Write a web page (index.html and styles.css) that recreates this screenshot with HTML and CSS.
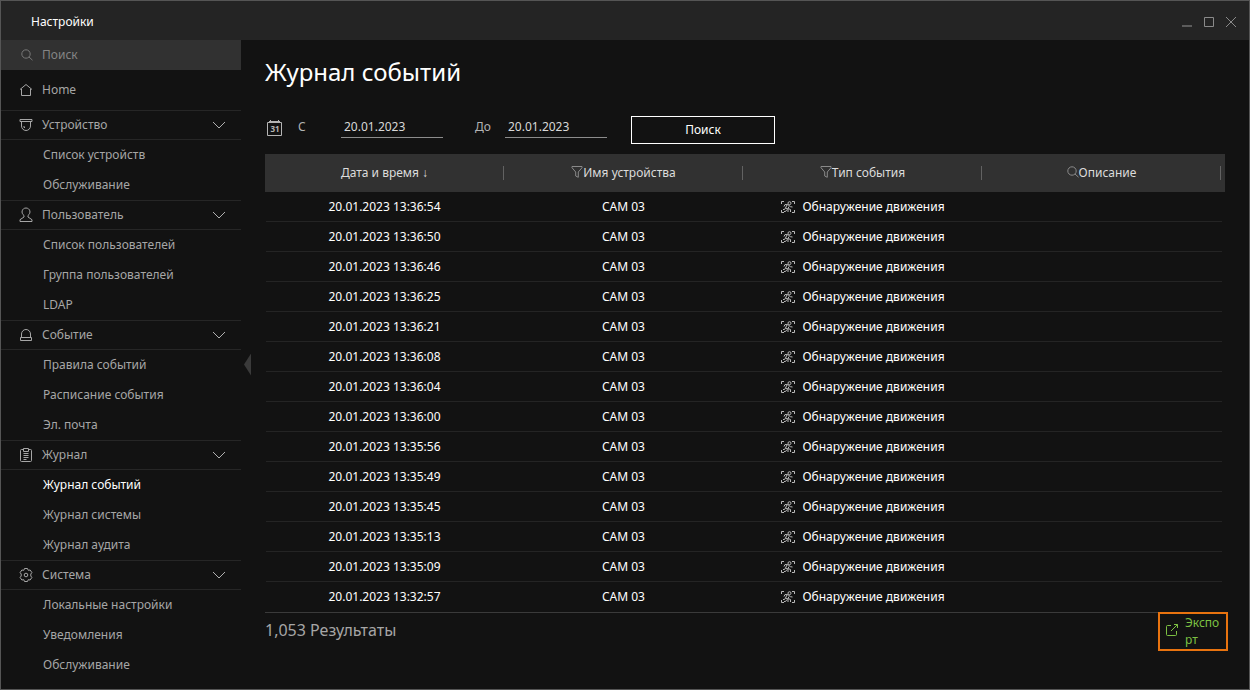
FILE: index.html
```
<!DOCTYPE html>
<html lang="ru">
<head>
<meta charset="utf-8">
<meta name="viewport" content="width=device-width, initial-scale=1">
<title>Настройки</title>
<link rel="stylesheet" href="styles.css">
<script src="app.js" defer></script>
</head>
<body>
<svg class="sprite" aria-hidden="true">
  <symbol id="i-search" viewBox="0 0 12 12"><circle cx="5" cy="5" r="4.2"/><path d="M8 8l3.500 3.200"/></symbol>
  <symbol id="i-filter" viewBox="0 0 12 12"><path d="M1 .5h10v1.200L7.300 6v5.300L4.700 10V6L1 1.700z"/></symbol>
  <symbol id="i-chevron" viewBox="0 0 14 8"><path d="M1 1l6 6 6-6"/></symbol>
  <symbol id="i-motion" viewBox="0 0 16 14"><path d="M1.500 4V1.500H4M12 1.500h2.500V4M14.500 10v2.500H12M4 12.500H1.500V10"/><circle cx="9.500" cy="3.200" r="1.500"/><path d="M4 6.500l1-2 3 .2 2.500 2 2 .3M7 5L5.500 8l2.500 1v3M5.500 8L4.500 9.500H3M9 6.500L8 8.500l2.500 1v2.500M4 11.500h1.500l1.500-2"/></symbol>
</svg>
<div class="window">
  <header class="titlebar">
    <span>Настройки</span>
    <div class="window-actions">
      <button type="button" aria-label="Свернуть"><svg class="icon" width="12" height="12" viewBox="0 0 12 12"><path class="thick" d="M1 10h10"/></svg></button>
      <button type="button" aria-label="Развернуть"><svg class="icon" width="12" height="12" viewBox="0 0 12 12"><path d="M1.500 1.500h9v9h-9z"/></svg></button>
      <button type="button" aria-label="Закрыть"><svg class="icon" width="12" height="12" viewBox="0 0 12 12"><path d="M1 1l10 10M11 1L1 11"/></svg></button>
    </div>
  </header>
  <div class="body">
    <aside class="sidebar">
      <label class="side-search"><svg class="icon" width="12" height="12"><use href="#i-search"/></svg><input type="search" placeholder="Поиск" aria-label="Поиск"></label>
      <nav>
        <a class="home" href="#home"><svg class="icon" width="14" height="14" viewBox="0 0 14 14"><path d="M1 6.500L7 1.500l6 5M2.500 6v6.500h9V6"/></svg>Home</a>
        <section>
          <button class="group" type="button" aria-expanded="true"><svg class="icon" width="14" height="14" viewBox="0 0 14 14"><path d="M1 1.500h12v2H1zM2.500 3.500v4.500a4.500 4.500 0 0 0 9 0V3.500M5 8v1.500h1"/></svg><span>Устройство</span><svg class="icon chevron" width="14" height="8"><use href="#i-chevron"/></svg></button>
          <ul><li><a href="#devices">Список устройств</a></li><li><a href="#maintenance">Обслуживание</a></li></ul>
        </section>
        <section>
          <button class="group" type="button" aria-expanded="true"><svg class="icon" width="14" height="16" viewBox="0 0 14 16"><path d="M5 8.500C1.500 6 3 1 7 1s5.500 5 2 7.500v1.500l4 2.700v1.800H1v-1.800L5 10z"/></svg><span>Пользователь</span><svg class="icon chevron" width="14" height="8"><use href="#i-chevron"/></svg></button>
          <ul><li><a href="#users">Список пользователей</a></li><li><a href="#groups">Группа пользователей</a></li><li><a href="#ldap">LDAP</a></li></ul>
        </section>
        <section>
          <button class="group" type="button" aria-expanded="true"><svg class="icon" width="14" height="14" viewBox="0 0 14 14"><path d="M2.500 9.500V6a4.500 4.500 0 0 1 9 0v3.500M1.500 9.500h11v3h-11z"/></svg><span>Событие</span><svg class="icon chevron" width="14" height="8"><use href="#i-chevron"/></svg></button>
          <ul><li><a href="#rules">Правила событий</a></li><li><a href="#schedule">Расписание события</a></li><li><a href="#mail">Эл. почта</a></li></ul>
        </section>
        <section>
          <button class="group" type="button" aria-expanded="true"><svg class="icon" width="14" height="14" viewBox="0 0 14 14"><path d="M4.500 1.500h-2q-1 0-1 1v10q0 1 1 1h9q1 0 1-1v-10q0-1-1-1h-2M4.500.5h5v3h-5zM4.500 5.500h5M4.500 7.500h5M4.500 9.500h5M4.500 11.500h3"/></svg><span>Журнал</span><svg class="icon chevron" width="14" height="8"><use href="#i-chevron"/></svg></button>
          <ul><li><a class="current" aria-current="page" href="#event-log">Журнал событий</a></li><li><a href="#system-log">Журнал системы</a></li><li><a href="#audit-log">Журнал аудита</a></li></ul>
        </section>
        <section>
          <button class="group" type="button" aria-expanded="true"><svg class="icon" width="14" height="14" viewBox="0 0 14 14"><circle cx="7" cy="7" r="1.800"/><path d="M5.500.5h3l.7 1.800 1.900-.3 1.800 2.500L11.800 6v2l1.100 1.500-1.800 2.500-1.900-.3-.7 1.800h-3l-.7-1.800-1.900.3-1.800-2.500L2.200 8V6L1.100 4.500 2.900 2l1.900.3z"/></svg><span>Система</span><svg class="icon chevron" width="14" height="8"><use href="#i-chevron"/></svg></button>
          <ul><li><a href="#local">Локальные настройки</a></li><li><a href="#notifications">Уведомления</a></li><li><a href="#service">Обслуживание</a></li></ul>
        </section>
      </nav>
      <button class="collapse" type="button" aria-label="Скрыть меню"></button>
    </aside>
    <main>
      <h1>Журнал событий</h1>
      <form class="filters">
        <svg class="icon calendar" width="16" height="16" viewBox="0 0 16 16"><path d="M.5 2.500h14v13H.5zM3.500 0v3M11.500 0v3M2 1.500h11"/><text x="8" y="12">31</text></svg>
        <label class="from"><span>С</span><input type="text" value="20.01.2023"></label>
        <label class="to"><span>До</span><input type="text" value="20.01.2023"></label>
        <button type="button" class="submit">Поиск</button>
      </form>
      <table>
        <colgroup><col><col><col><col><col class="gutter"></colgroup>
        <thead><tr>
          <th scope="col">Дата и время ↓</th>
          <th scope="col"><svg class="icon" width="12" height="12"><use href="#i-filter"/></svg>Имя устройства</th>
          <th scope="col"><svg class="icon" width="12" height="12"><use href="#i-filter"/></svg>Тип события</th>
          <th scope="col"><svg class="icon" width="12" height="12"><use href="#i-search"/></svg>Описание</th>
          <td></td>
        </tr></thead>
        <tbody id="events"></tbody>
      </table>
      <footer>
        <p>1,053 Результаты</p>
        <button type="button" class="export"><svg class="icon" width="14" height="14" viewBox="0 0 14 14"><path d="M6 2.500H2.500q-1 0-1 1v8q0 1 1 1h8q1 0 1-1V8M6 8l6.500-6.500M9 1.500h3.500V5"/></svg><span>Экспорт</span></button>
      </footer>
    </main>
  </div>
</div>
</body>
</html>
```
FILE: styles.css
```
* { box-sizing: border-box; }
body {
  margin: 0;
  background: #121212;
  color: #fff;
  font: 12px/20px "Noto Sans", "Open Sans", sans-serif;
}
button, input { font: inherit; color: inherit; background: none; border: 0; padding: 0; margin: 0; border-radius: 0; }
a { color: inherit; text-decoration: none; }
ul { list-style: none; margin: 0; padding: 0; }
.sprite { position: absolute; width: 0; height: 0; }
.icon { flex: none; fill: none; stroke: currentColor; stroke-width: 1; }

.window { display: flex; flex-direction: column; min-height: 100vh; border: 1px solid #555; }
.titlebar {
  display: flex; align-items: center; justify-content: space-between;
  padding: 10px 12px 8px 30px; min-height: 39px; background: #242424;
}
.window-actions { display: flex; gap: 10px; color: #8a8a8a; }
.window-actions button { display: flex; }
.thick { stroke-width: 2; stroke: #5c5c5c; }

.body { display: flex; flex: 1; }
.sidebar { position: relative; flex: none; width: 240px; color: #a6a6a6; }
.side-search { display: flex; align-items: center; gap: 9px; height: 30px; padding: 0 20px; background: #313131; }
.side-search .icon { color: #777; }
.side-search input { flex: 1; min-width: 0; outline: 0; }
.side-search input::placeholder { color: #858585; opacity: 1; }
.home { display: flex; align-items: center; gap: 9px; height: 40px; padding: 0 18px; }
.group {
  display: flex; align-items: center; gap: 9px; width: 100%; height: 30px; padding: 0 15px 0 18px;
  border-top: 1px solid #262626; border-bottom: 1px solid #262626; text-align: left;
}
.group span { flex: 1; }
.chevron { color: #b0b0b0; }
.sidebar li a { display: block; padding: 5px 0 5px 42px; }
.sidebar .current { color: #fff; }
.collapse {
  position: absolute; top: 50%; right: -10px; width: 7px; height: 22px; margin-top: -11px;
  background: #3a3a3a; clip-path: polygon(100% 0, 100% 100%, 0 50%);
}

main { flex: 1; min-width: 0; padding: 16px 24px 0; }
h1 { margin: 0 0 28px; font-size: 24px; line-height: 32px; font-weight: 400; }
.filters { display: flex; align-items: center; height: 28px; margin-bottom: 10px; color: #b4b4b4; }
.calendar { margin: 0 15px 4px 2px; }
.calendar text { fill: currentColor; stroke: none; font-size: 8px; font-weight: 700; text-anchor: middle; }
.filters label { display: flex; align-items: center; padding-bottom: 6px; }
.from span { width: 43px; }
.to { margin: 0 24px 0 32px; }
.to span { width: 30px; }
.filters input { width: 102px; height: 22px; padding: 0 3px 1px; border-bottom: 1px solid #8c8c8c; color: #d8d8d8; outline: 0; }
.submit { width: 144px; height: 28px; border: 1px solid #fff; color: #fff; }

table { width: 100%; table-layout: fixed; border-spacing: 0; border-bottom: 1px solid #3a3a3a; }
.gutter { width: 4px; }
th, td { padding: 0; text-align: center; }
thead tr { background: #313131; }
th { height: 38px; font-weight: 400; color: #dcdcdc; background: linear-gradient(#626262, #626262) right center / 1px 14px no-repeat; }
th .icon { vertical-align: -1px; color: #8a8a8a; }
tbody td { height: 30px; }
tbody tr { background: linear-gradient(#242424, #242424) 1px 100% / calc(100% - 4px) 1px no-repeat; }
tbody tr:last-child { background: none; }
tbody .icon { vertical-align: -3px; margin-right: 6px; color: #b8b8b8; }

footer { display: flex; justify-content: space-between; align-items: flex-start; margin: -1px -3px 0 0; }
footer p { margin: 6px 0 0; font-size: 16px; line-height: 24px; color: #a6a6a6; }
.export {
  display: flex; align-items: center; gap: 6px; width: 70px; padding: 0 4px 1px 5px; border: 2px solid #e8730f;
  color: #7cc142; line-height: 17px; text-align: left;
}
.export .icon { margin-bottom: 2px; }
.export span { min-width: 0; overflow-wrap: anywhere; }
```
FILE: app.js
```
const times = ["13:36:54", "13:36:50", "13:36:46", "13:36:25", "13:36:21", "13:36:08", "13:36:04", "13:36:00", "13:35:56", "13:35:49", "13:35:45", "13:35:13", "13:35:09", "13:32:57"];
document.getElementById("events").innerHTML = times.map((time) => `
  <tr>
    <td>20.01.2023 ${time}</td>
    <td>CAM 03</td>
    <td><svg class="icon" width="16" height="14"><use href="#i-motion"/></svg>Обнаружение движения</td>
    <td></td>
    <td></td>
  </tr>`).join("");
```
